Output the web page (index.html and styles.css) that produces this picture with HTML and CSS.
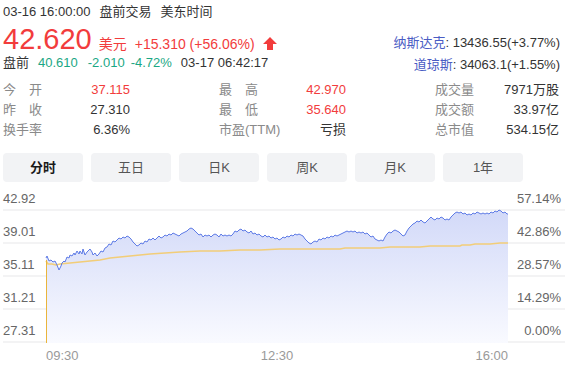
FILE: index.html
```html
<!DOCTYPE html>
<html lang="zh-CN">
<head>
  <meta charset="UTF-8" />
  <meta name="viewport" content="width=device-width, initial-scale=1.0" />
  <title>行情</title>
  <link rel="stylesheet" href="styles.css">
</head>
<body>
  <div class="quote">
    <div class="meta">
      <span>03-16 16:00:00</span>
      <span>盘前交易</span>
      <span>美东时间</span>
    </div>

    <div class="summary">
      <div class="main">
        <div class="price-row">
          <span class="price">42.620</span>
          <span class="unit">美元</span>
          <span class="change">+15.310 (+56.06%)</span>
          <svg class="arrow" width="14" height="13" viewBox="0 0 14 13">
            <path d="M7 0 L14 7 L10 7 L10 13 L4 13 L4 7 L0 7 Z" fill="#f23c3c"/>
          </svg>
        </div>
        <div class="pre-row">
          <span>盘前</span>
          <span class="down p1">40.610</span>
          <span class="down p2">-2.010</span>
          <span class="down p3">-4.72%</span>
          <span class="p4">03-17 06:42:17</span>
        </div>
      </div>
      <div class="indices">
        <div><span class="idx-name">纳斯达克</span>: 13436.55(+3.77%)</div>
        <div><span class="idx-name">道琼斯</span>: 34063.1(+1.55%)</div>
      </div>
    </div>

    <div class="stats">
      <div class="stat"><span class="lbl spread">今开</span><span class="up">37.115</span></div>
      <div class="stat"><span class="lbl spread">最高</span><span class="up">42.970</span></div>
      <div class="stat"><span class="lbl">成交量</span><span>7971万股</span></div>
      <div class="stat"><span class="lbl spread">昨收</span><span>27.310</span></div>
      <div class="stat"><span class="lbl spread">最低</span><span class="up">35.640</span></div>
      <div class="stat"><span class="lbl">成交额</span><span>33.97亿</span></div>
      <div class="stat"><span class="lbl">换手率</span><span>6.36%</span></div>
      <div class="stat"><span class="lbl">市盈(TTM)</span><span>亏损</span></div>
      <div class="stat"><span class="lbl">总市值</span><span>534.15亿</span></div>
    </div>

    <div class="tabs">
      <div class="tab active">分时</div>
      <div class="tab">五日</div>
      <div class="tab">日K</div>
      <div class="tab">周K</div>
      <div class="tab">月K</div>
      <div class="tab">1年</div>
    </div>

    <div class="chart">
      <div class="chart-row first"><span>42.92</span><span>57.14%</span></div>
      <div class="chart-row"><span>39.01</span><span>42.86%</span></div>
      <div class="chart-row"><span>35.11</span><span>28.57%</span></div>
      <div class="chart-row"><span>31.21</span><span>14.29%</span></div>
      <div class="chart-row"><span>27.31</span><span>0.00%</span></div>

      <!-- intraday price / average, drawn in page coordinates -->
      <svg class="plot" width="565" height="170" viewBox="0 183 565 170">
        <defs>
          <linearGradient id="fillGrad" gradientUnits="userSpaceOnUse" x1="0" y1="210" x2="0" y2="344">
            <stop offset="0" stop-color="#d2d9f8"/>
            <stop offset="1" stop-color="#f9faff"/>
          </linearGradient>
        </defs>
        <polygon fill="url(#fillGrad)" points="46,259 47,257 49,262 51,261 53,263 55,262 57,266 59,271 61,267 62,264 64,262 65,263 67,258 69,259 70,256 72,257 74,254 75,256 77,252 79,255 80,252 82,255 83,250 85,256 87,253 88,252 90,250 92,253 93,256 95,254 97,257 99,255 101,252 103,253 105,249 107,248 109,245 111,246 113,242 115,243 117,241 119,239 121,240 123,238 125,239 127,237 129,238 131,240 133,243 135,245 137,247 139,246 141,244 143,245 145,242 147,243 149,240 151,241 153,239 155,241 157,239 159,237 161,239 163,238 165,236 167,237 169,235 171,236 173,234 175,235 177,236 179,237 181,235 183,234 185,233 187,232 189,230 191,229 193,230 195,232 197,234 199,236 201,235 203,238 205,236 207,237 209,236 211,238 213,236 215,235 217,236 219,238 221,235 223,237 225,236 227,237 229,236 231,237 233,235 235,232 237,233 239,231 241,230 243,232 245,231 247,233 249,234 251,232 253,235 255,234 257,236 259,235 261,237 263,238 265,236 267,238 269,237 271,239 273,238 275,240 277,239 279,241 281,240 283,238 285,239 287,237 289,238 291,236 293,237 295,235 297,236 299,235 301,236 303,237 305,240 307,242 309,244 311,245 313,243 315,242 317,243 319,240 321,241 323,239 325,240 327,238 329,239 331,237 333,238 335,236 337,237 339,236 341,235 343,234 345,233 347,232 349,233 351,232 353,233 355,232 357,234 359,233 361,234 363,233 365,235 367,234 369,236 371,238 373,237 375,240 377,241 379,242 381,241 383,242 385,238 387,235 389,233 391,234 393,232 395,231 397,232 399,233 401,235 403,237 405,236 407,232 409,229 411,227 413,225 415,224 417,222 419,223 421,221 423,223 425,224 427,222 429,220 431,218 433,220 435,221 437,219 439,220 441,218 443,219 445,221 447,220 449,221 451,218 453,216 455,214 457,213 459,214 461,213 463,215 465,214 467,216 469,215 471,216 473,214 475,215 477,213 479,214 481,215 483,214 485,215 487,214 489,215 491,213 493,214 495,212 497,213 499,211 501,212 503,214 505,213 507,215 508,215 508,344 46,344"/>
        <polyline class="avg" points="46,262 48,265 52,265 56,266 60,265 70,264 80,263 90,262 100,261 110,259 120,258 130,257 140,256 150,255 165,254 180,253 200,252 220,252 240,251 260,251 280,250 300,250 320,250 340,250 345,249 360,249 380,249 390,248 420,248 430,247 460,247 462,246 470,246 475,245 490,245 500,244 508,244"/>
        <line class="open-tick" x1="46.5" y1="344" x2="46.5" y2="261"/>
        <polyline class="price-line" points="46,259 47,257 49,262 51,261 53,263 55,262 57,266 59,271 61,267 62,264 64,262 65,263 67,258 69,259 70,256 72,257 74,254 75,256 77,252 79,255 80,252 82,255 83,250 85,256 87,253 88,252 90,250 92,253 93,256 95,254 97,257 99,255 101,252 103,253 105,249 107,248 109,245 111,246 113,242 115,243 117,241 119,239 121,240 123,238 125,239 127,237 129,238 131,240 133,243 135,245 137,247 139,246 141,244 143,245 145,242 147,243 149,240 151,241 153,239 155,241 157,239 159,237 161,239 163,238 165,236 167,237 169,235 171,236 173,234 175,235 177,236 179,237 181,235 183,234 185,233 187,232 189,230 191,229 193,230 195,232 197,234 199,236 201,235 203,238 205,236 207,237 209,236 211,238 213,236 215,235 217,236 219,238 221,235 223,237 225,236 227,237 229,236 231,237 233,235 235,232 237,233 239,231 241,230 243,232 245,231 247,233 249,234 251,232 253,235 255,234 257,236 259,235 261,237 263,238 265,236 267,238 269,237 271,239 273,238 275,240 277,239 279,241 281,240 283,238 285,239 287,237 289,238 291,236 293,237 295,235 297,236 299,235 301,236 303,237 305,240 307,242 309,244 311,245 313,243 315,242 317,243 319,240 321,241 323,239 325,240 327,238 329,239 331,237 333,238 335,236 337,237 339,236 341,235 343,234 345,233 347,232 349,233 351,232 353,233 355,232 357,234 359,233 361,234 363,233 365,235 367,234 369,236 371,238 373,237 375,240 377,241 379,242 381,241 383,242 385,238 387,235 389,233 391,234 393,232 395,231 397,232 399,233 401,235 403,237 405,236 407,232 409,229 411,227 413,225 415,224 417,222 419,223 421,221 423,223 425,224 427,222 429,220 431,218 433,220 435,221 437,219 439,220 441,218 443,219 445,221 447,220 449,221 451,218 453,216 455,214 457,213 459,214 461,213 463,215 465,214 467,216 469,215 471,216 473,214 475,215 477,213 479,214 481,215 483,214 485,215 487,214 489,215 491,213 493,214 495,212 497,213 499,211 501,212 503,214 505,213 507,215 508,215"/>
      </svg>

      <div class="axis">
        <span>09:30</span>
        <span>12:30</span>
        <span>16:00</span>
      </div>
    </div>
  </div>
</body>
</html>
```

FILE: styles.css
```css
/* Reset & Base */
* {
  margin: 0;
  padding: 0;
  box-sizing: border-box;
}

body {
  background-color: #ffffff;
  color: #333333;
  font-family: "Liberation Sans", "Noto Sans CJK SC", sans-serif;
  font-size: 13px;
}

.quote {
  padding: 3px 0 0 3px;
}

/* Header */
.meta {
  display: flex;
  gap: 9px;
  line-height: 18px;
}

.summary {
  display: flex;
  justify-content: space-between;
  align-items: flex-start;
  margin-top: 2px;
  padding-right: 5px;
}

.price-row {
  display: flex;
  align-items: baseline;
  height: 32px;
  color: #f23c3c;
}

.price {
  font-size: 29px;
  line-height: 32px;
}

.unit {
  font-size: 14px;
  margin-left: 7px;
}

.change {
  font-size: 14px;
  margin-left: 8px;
}

.arrow {
  align-self: flex-start;
  margin: 14px 0 0 8px;
}

.pre-row {
  display: flex;
  line-height: 16px;
}

.pre-row .p1 { margin-left: 9px; }
.pre-row .p2 { margin-left: 10px; }
.pre-row .p3 { margin-left: 6px; }
.pre-row .p4 { margin-left: 9px; }

.down { color: #1ba784; }
.up { color: #f23c3c; }

.indices {
  padding-top: 9px;
  margin-bottom: -5px;
  line-height: 22px;
  text-align: right;
}

.idx-name {
  color: #4a5cc4;
}

/* Stats */
.stats {
  display: grid;
  grid-template-columns: 127px 127px 124px;
  justify-content: space-between;
  margin-top: 9px;
  padding-right: 6px;
  line-height: 20px;
}

.stat {
  display: flex;
  justify-content: space-between;
}

.lbl {
  color: #8a8a8a;
}

.lbl.spread {
  display: inline-block;
  width: 39px;
  text-align: justify;
  text-align-last: justify;
}

/* Tabs */
.tabs {
  display: flex;
  gap: 8px;
  margin-top: 13px;
}

.tab {
  width: 80px;
  height: 29px;
  line-height: 29px;
  text-align: center;
  background-color: #f2f3f5;
  border-radius: 4px;
  color: #555555;
}

.tab.active {
  color: #1a1a1a;
  font-weight: 700;
}

/* Chart */
.chart {
  position: relative;
}

.chart-row {
  display: flex;
  justify-content: space-between;
  align-items: flex-end;
  height: 33px;
  padding: 0 4px 2px 0;
  border-bottom: 2px solid #f3f3f4;
  line-height: 16px;
  color: #666666;
}

.chart-row.first {
  height: 29px;
}

.plot {
  position: absolute;
  left: -3px;
  top: 0;
  overflow: visible;
  pointer-events: none;
}

.price-line {
  fill: none;
  stroke: #5d7ae6;
  stroke-width: 1;
  stroke-linejoin: round;
}

.avg {
  fill: none;
  stroke: #f2cd78;
  stroke-width: 1.6;
}

.open-tick {
  stroke: #eab53c;
  stroke-width: 1;
}

.axis {
  display: flex;
  justify-content: space-between;
  width: 462px;
  margin: 5px 0 0 43px;
  line-height: 16px;
  color: #9a9a9a;
}
```
